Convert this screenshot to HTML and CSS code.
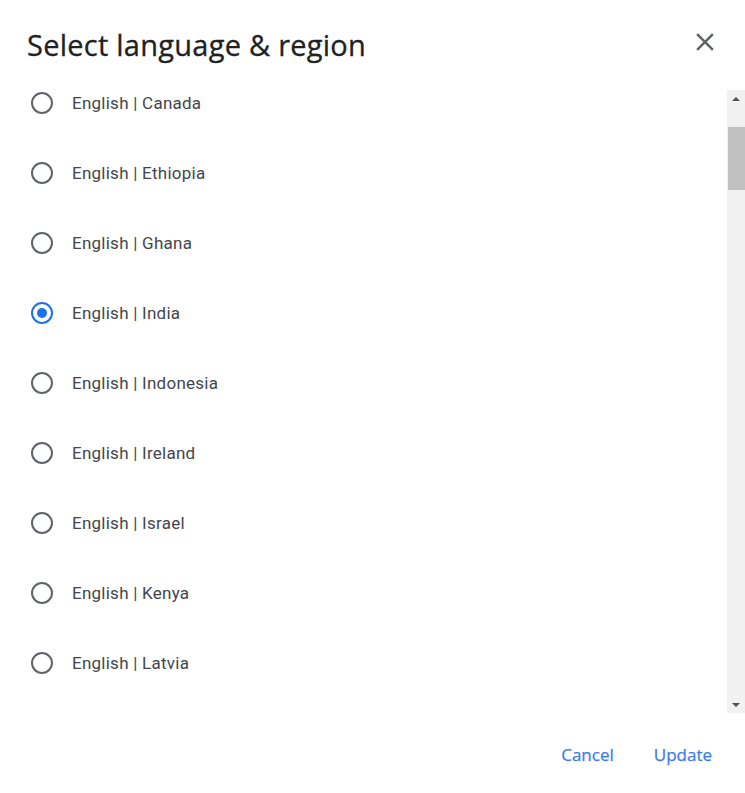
FILE: index.html
```html
<!DOCTYPE html>
<html lang="en">
<head>
<meta charset="utf-8">
<title>Select language &amp; region</title>
<link rel="stylesheet" href="styles.css">
</head>
<body>
<div class="dialog">
  <header class="header">
    <h1 class="title">Select language &amp; region</h1>
    <button class="close" aria-label="Close">
      <svg viewBox="0 0 24 24" width="30" height="30"><path d="M19 6.41L17.59 5 12 10.59 6.41 5 5 6.41 10.59 12 5 17.59 6.41 19 12 13.41 17.59 19 19 17.59 13.41 12z" fill="#5f6368"/></svg>
    </button>
  </header>
  <div class="scroller">
    <div class="viewport">
      <ul class="list">
        <li class="row"><span class="radio"></span><span class="label">English | Canada</span></li>
        <li class="row"><span class="radio"></span><span class="label">English | Ethiopia</span></li>
        <li class="row"><span class="radio"></span><span class="label">English | Ghana</span></li>
        <li class="row"><span class="radio checked"></span><span class="label">English | India</span></li>
        <li class="row"><span class="radio"></span><span class="label">English | Indonesia</span></li>
        <li class="row"><span class="radio"></span><span class="label">English | Ireland</span></li>
        <li class="row"><span class="radio"></span><span class="label">English | Israel</span></li>
        <li class="row"><span class="radio"></span><span class="label">English | Kenya</span></li>
        <li class="row"><span class="radio"></span><span class="label">English | Latvia</span></li>
      </ul>
    </div>
    <div class="scrollbar">
      <div class="sb-btn"><span class="arrow-up"></span></div>
      <div class="sb-track"><div class="sb-thumb"></div></div>
      <div class="sb-btn"><span class="arrow-down"></span></div>
    </div>
  </div>
  <footer class="footer">
    <button class="btn">Cancel</button>
    <button class="btn">Update</button>
  </footer>
</div>
</body>
</html>
```
FILE: styles.css
```css
html, body {
  margin: 0;
  padding: 0;
  background: #ffffff;
}
.dialog {
  width: 745px;
  height: 793px;
  display: flex;
  flex-direction: column;
  overflow: hidden;
  font-family: Roboto, "Liberation Sans", sans-serif;
}
.header {
  height: 90px;
  display: flex;
  align-items: flex-start;
  justify-content: space-between;
  padding: 0 25px 0 27px;
  box-sizing: border-box;
}
.title {
  margin: 25px 0 0 0;
  font-family: "Open Sans", sans-serif;
  font-weight: 500;
  font-size: 29px;
  line-height: 40px;
  color: #202124;
  letter-spacing: 0.25px;
  -webkit-text-stroke: 0.3px #202124;
}
.close {
  margin-top: 27px;
  width: 30px;
  height: 30px;
  padding: 0;
  border: none;
  background: none;
  display: flex;
}
.scroller {
  height: 623px;
  display: flex;
}
.viewport {
  flex: 1;
  overflow: hidden;
}
.list {
  list-style: none;
  margin: -22px 0 0 0;
  padding: 0;
}
.row {
  height: 70px;
  display: flex;
  align-items: center;
  padding-left: 31px;
}
.radio {
  width: 22px;
  height: 22px;
  box-sizing: border-box;
  border: 2px solid #5f6368;
  border-radius: 50%;
  flex: none;
  display: flex;
  align-items: center;
  justify-content: center;
}
.radio.checked {
  border-color: #1a73e8;
}
.radio.checked::after {
  content: "";
  width: 10px;
  height: 10px;
  border-radius: 50%;
  background: #1a73e8;
}
.label {
  margin-left: 19px;
  font-size: 17px;
  color: #43464a;
  letter-spacing: 0.25px;
}
.scrollbar {
  width: 18px;
  background: #f1f1f1;
  display: flex;
  flex-direction: column;
}
.sb-btn {
  height: 17px;
  display: flex;
  align-items: center;
  justify-content: center;
  padding-right: 1px;
}
.arrow-up {
  width: 0;
  height: 0;
  border-left: 4px solid transparent;
  border-right: 4px solid transparent;
  border-bottom: 4px solid #505050;
}
.arrow-down {
  width: 0;
  height: 0;
  border-left: 4px solid transparent;
  border-right: 4px solid transparent;
  border-top: 4px solid #505050;
}
.sb-track {
  flex: 1;
}
.sb-thumb {
  margin: 20px 0 0 1px;
  height: 63px;
  background: #c1c1c1;
}
.footer {
  flex: 1;
  display: flex;
  justify-content: flex-end;
  align-items: center;
  padding: 3px 25px 0 0;
  gap: 24px;
}
.btn {
  border: none;
  background: none;
  padding: 8px;
  font-family: "Open Sans", sans-serif;
  font-weight: 500;
  font-size: 17px;
  color: #3b7de6;
  letter-spacing: 0;
  -webkit-text-stroke: 0.25px #3b7de6;
}
```
